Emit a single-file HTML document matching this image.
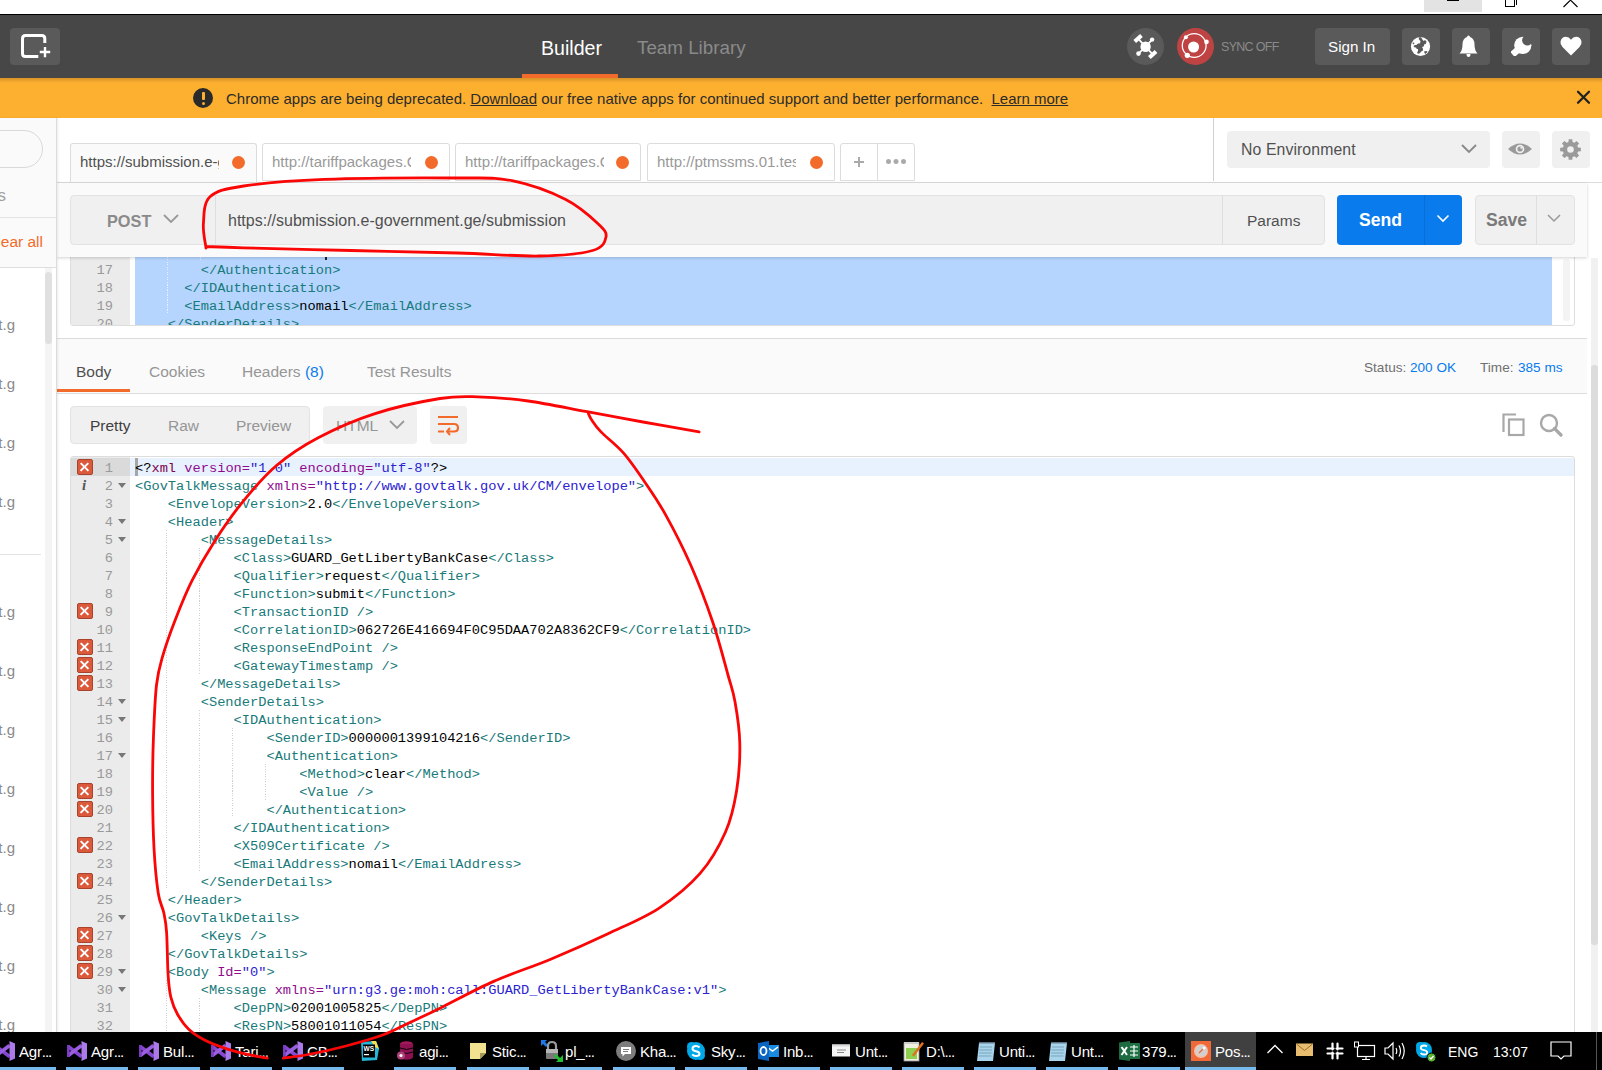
<!DOCTYPE html>
<html><head><meta charset="utf-8">
<style>
*{margin:0;padding:0;box-sizing:border-box}
html,body{width:1602px;height:1070px;overflow:hidden;background:#fff;font-family:"Liberation Sans",sans-serif}
.a{position:absolute}
.mono{font-family:"Liberation Mono",monospace}
/* nav */
#top{left:0;top:0;width:1602px;height:14px;background:#fff}
#nav{left:0;top:14px;width:1602px;height:64px;background:#474747;border-top:1px solid #000}
.nbtn{background:#5a5a5a;border-radius:4px;height:37px;top:28px}
#banner{left:0;top:78px;width:1602px;height:40px;background:#fdb02f}
#banner:before{content:"";position:absolute;left:0;top:0;right:0;height:5px;background:linear-gradient(#d99228,#fdb02f)}
/* sidebar */
#side{left:0;top:118px;width:57px;height:914px;background:#fff;border-right:1px solid #dcdcdc;box-shadow:1px 0 2px rgba(0,0,0,.08);overflow:hidden;z-index:2}
.tg{font-size:15px;color:#8a8a8a;white-space:nowrap}
.tab{top:143px;height:40px;border:1px solid #dcdcdc;border-bottom:none;border-radius:3px 3px 0 0;background:#fff}
.tab span{position:absolute;left:9px;top:9px;font-size:15px;color:#999;white-space:nowrap;overflow:hidden;width:139px}
.tab i{position:absolute;right:11px;top:12px;width:13px;height:13px;border-radius:50%;background:#f26b2a}
.code{font-size:13.7px;line-height:18px;white-space:pre;color:#000}
.cl{position:absolute;left:64px;height:18px;line-height:18px;margin-top:2px}
.ln{position:absolute;left:0;width:42px;text-align:right;color:#999;height:18px;line-height:18px;margin-top:2px}
.err{position:absolute;left:5.5px;width:16px;height:16px;background:#dc5a3c;border:1px solid #a8432c;border-radius:2px}
.err:before,.err:after{content:"";position:absolute;left:1.5px;top:6px;width:11px;height:2.2px;background:#fff;transform:rotate(45deg)}
.err:after{transform:rotate(-45deg)}
.info{position:absolute;left:11px;width:8px;font:italic bold 15px "Liberation Serif",serif;color:#555;height:18px;line-height:18px}
.fold{position:absolute;left:47px;width:0;height:0;border-left:4px solid transparent;border-right:4px solid transparent;border-top:5px solid #777}
.gd{position:absolute;width:1px;background:repeating-linear-gradient(#cfcfcf 0 1px,transparent 1px 2.5px)}
.tbt{top:1043px;font-size:15px;color:#fff;white-space:nowrap;letter-spacing:-0.2px}
.el{letter-spacing:-1px}
.st{top:360px;font-size:13.6px;color:#707070;white-space:nowrap}
.tb2{height:38px;border-bottom:1px solid #dcdcdc;border-radius:3px 3px 0 0}
.gdw{background:repeating-linear-gradient(#e9f1ff 0 1px,transparent 1px 2.5px)}
</style></head><body>
<div id="top" class="a">
  <div class="a" style="left:1424px;top:0;width:58px;height:12px;background:#e3e3e3"></div>
  <div class="a" style="left:1447px;top:0;width:12px;height:1px;background:#000"></div>
  <div class="a" style="left:1505px;top:-4px;width:10px;height:11px;border:1px solid #000;background:#fff;z-index:1"></div>
  <div class="a" style="left:1507px;top:-6px;width:10px;height:11px;border-top:1px solid #000;border-right:1px solid #000"></div>
  <svg class="a" style="left:1560px;top:0" width="20" height="10"><path d="M3.5 7 L10.5 0 M10.5 0 L17.5 7 M9.5 0 L10.5 -1 M11.5 0 L10.5 -1" stroke="#000" stroke-width="1.1" fill="none"/></svg>
</div>
<div id="nav" class="a">
  <div class="a nbtn" style="left:10px;top:13px;width:50px;height:37px"></div>
  <svg class="a" style="left:20px;top:19px" width="32" height="26"><path d="M24.8 9 V4.5 Q24.8 1.5 21.8 1.5 H5.5 Q2.5 1.5 2.5 4.5 V19.5 Q2.5 22.5 5.5 22.5 H18.3" stroke="#fff" stroke-width="3" fill="none"/><path d="M25 13 V23.2 M19.8 18 H30.2" stroke="#fff" stroke-width="2.4" fill="none"/></svg>
  <div class="a" style="left:541px;top:22px;font-size:19.6px;color:#fff">Builder</div>
  <div class="a" style="left:522px;top:59px;width:96px;height:4px;background:#f26b2a"></div>
  <div class="a" style="left:637px;top:21.5px;font-size:18.8px;color:#8a8a8a">Team Library</div>
  <div class="a" style="left:1127px;top:13px;width:37px;height:37px;border-radius:50%;background:#5a5a5a"></div>
  <div class="a" style="left:1177px;top:13px;width:37px;height:37px;border-radius:50%;background:#bf4343"></div>
  <div class="a" style="left:1221px;top:25px;font-size:12.5px;color:#8a8a8a;letter-spacing:-0.7px">SYNC OFF</div>
  <div class="a nbtn" style="left:1315px;top:13px;width:75px"></div>
  <div class="a" style="left:1328px;top:23px;font-size:15.2px;color:#fff">Sign In</div>
  <div class="a nbtn" style="left:1402px;top:13px;width:38px"></div>
  <div class="a nbtn" style="left:1452px;top:13px;width:38px"></div>
  <div class="a nbtn" style="left:1502px;top:13px;width:38px"></div>
  <div class="a nbtn" style="left:1552px;top:13px;width:38px"></div>
</div><!--NAVICONS-->
<svg class="a" style="left:1130px;top:30px" width="32" height="32"><path d="M8.1 8.6 L22.7 24.4 M15.6 16.7 L8.5 23.6 M15.6 16.7 L22.1 9.6" stroke="#fff" stroke-width="1.8"/><circle cx="15.6" cy="16.7" r="5.2" fill="#fff"/><rect x="3.6" y="6.6" width="9" height="4" transform="rotate(-42 8.1 8.6)" fill="#fff"/><rect x="18.2" y="22.4" width="9" height="4" transform="rotate(-42 22.7 24.4)" fill="#fff"/><circle cx="22.1" cy="9.6" r="2.2" fill="#fff"/><circle cx="8.5" cy="23.6" r="2.3" fill="#fff"/></svg>
<svg class="a" style="left:1180px;top:31px" width="32" height="32"><circle cx="14.2" cy="14.5" r="11.9" stroke="#fff" stroke-width="1.3" fill="none"/><circle cx="13.6" cy="16" r="5.5" fill="#fff"/><circle cx="5.9" cy="6.2" r="2" fill="#fff"/><circle cx="26.5" cy="10.9" r="2.3" fill="#fff"/><circle cx="7.3" cy="24.3" r="2.6" fill="#fff"/></svg>
<svg class="a" style="left:1410px;top:36px" width="22" height="22"><circle cx="10.5" cy="10.5" r="9.6" fill="#fff"/><path d="M9 1.2 Q8 3.5 10 4.5 Q11.5 6 9.5 7.5 Q7 7 6.5 9 Q4.5 8.5 3.5 10 Q4.5 12 6 11.5 Q6.5 13.5 8 13 Q8.5 15.5 7 17 Q8.5 18.5 10 17 Q11 15 13 14.5 Q13.5 12.5 12 11 Q14.5 10.5 14 8.5 Q16.5 8 16.5 5.5 Q15 3.5 13.5 5 Q12 3 11 1.2 Z" fill="#5a5a5a"/><path d="M2.5 6.5 Q4 6 4.5 7.5 L3 8.5 Z" fill="#5a5a5a"/><path d="M14 15.5 Q16 14.5 17.5 15.5 Q16.5 17.5 15 18 Z" fill="#5a5a5a"/></svg>
<svg class="a" style="left:1459px;top:34px" width="20" height="24"><path d="M9.5 1.5 Q11 1.5 11 3 Q15.5 4.5 15.5 10.5 Q15.5 16.5 18.5 19.5 H0.5 Q3.5 16.5 3.5 10.5 Q3.5 4.5 8 3 Q8 1.5 9.5 1.5 Z" fill="#fff"/><path d="M7.5 20 Q7.5 23 9.5 23 Q11.5 23 11.5 20 Z" fill="#fff"/></svg>
<svg class="a" style="left:1509px;top:35px" width="24" height="23"><defs><mask id="wm"><rect width="24" height="23" fill="#fff"/><circle cx="18.3" cy="5.2" r="5.2" fill="#000"/></mask></defs><g mask="url(#wm)"><circle cx="13.8" cy="10.3" r="8.6" fill="#fff"/><path d="M12 12 L3.5 19.5" stroke="#fff" stroke-width="6.5"/></g></svg>
<svg class="a" style="left:1560px;top:36px" width="22" height="20"><path d="M11 19.5 L2.5 11 Q0 8.5 0.5 5.5 Q1.5 1 6 0.8 Q9 0.8 11 3.8 Q13 0.8 16 0.8 Q20.5 1 21.5 5.5 Q22 8.5 19.5 11 Z" fill="#fff"/></svg>
<!--/NAVICONS-->
<div id="banner" class="a">
  <div class="a" style="left:193px;top:10px;width:20px;height:20px;border-radius:50%;background:#2a2a2a"></div>
  <div class="a" style="left:201.5px;top:14px;width:3px;height:8px;background:#fdb02f;border-radius:1px"></div>
  <div class="a" style="left:201.5px;top:23.5px;width:3px;height:3px;background:#fdb02f;border-radius:50%"></div>
  <div class="a" style="left:226px;top:12px;font-size:15px;color:#2b2b2b;white-space:nowrap">Chrome apps are being deprecated. <u>Download</u> our free native apps for continued support and better performance. &nbsp;<u>Learn more</u></div>
  <svg class="a" style="left:1576px;top:12px" width="15" height="15"><path d="M2 1.8 L13 12.8 M13 1.8 L2 12.8" stroke="#222" stroke-width="2.3" stroke-linecap="round"/></svg>
</div>
<div id="side" class="a"><div class="a" style="left:-40px;top:12px;width:83px;height:38px;border:1px solid #d9d9d9;border-radius:19px;background:#fafafa"></div><div class="a" style="left:0;top:0;width:56px;height:150px;background:#fafafa;z-index:-1"></div><div class="a" style="right:50px;top:68px;font-size:17px;color:#a0a0a0">s</div><div class="a" style="left:0;top:99px;width:56px;height:1px;background:#e3e3e3"></div><div class="a" style="right:13px;top:115px;font-size:15.5px;color:#f26b2a;white-space:nowrap">Clear all</div><div class="a" style="left:0;top:149px;width:56px;height:1px;background:#dedede"></div><div class="a" style="left:45px;top:150px;width:7px;height:764px;background:#f4f4f4"></div><div class="a" style="left:45px;top:154px;width:7px;height:72px;background:#e0e0e0;border-radius:3.5px"></div><div class="a" style="left:0;top:436px;width:41px;height:1px;background:#e3e3e3"></div><div class="a tg" style="right:41px;top:198px">t.g</div><div class="a tg" style="right:41px;top:257px">t.g</div><div class="a tg" style="right:41px;top:316px">t.g</div><div class="a tg" style="right:41px;top:375px">t.g</div><div class="a tg" style="right:41px;top:485px">t.g</div><div class="a tg" style="right:41px;top:544px">t.g</div><div class="a tg" style="right:41px;top:603px">t.g</div><div class="a tg" style="right:41px;top:662px">t.g</div><div class="a tg" style="right:41px;top:721px">t.g</div><div class="a tg" style="right:41px;top:780px">t.g</div><div class="a tg" style="right:41px;top:839px">t.g</div><div class="a tg" style="right:41px;top:898px">t.g</div></div>

<div class="a" style="left:57px;top:118px;width:1545px;height:914px;background:#fff"></div>
<!-- tabs row -->
<div class="a tab" style="left:70px;width:187px;background:#fafafa"><span style="color:#505050">https://submission.e-g</span><i></i></div>
<div class="a tab tb2" style="left:262px;width:188px"><span>http://tariffpackages.C</span><i></i></div>
<div class="a tab tb2" style="left:455px;width:186px"><span>http://tariffpackages.C</span><i></i></div>
<div class="a tab tb2" style="left:647px;width:188px"><span>http://ptmssms.01.tes</span><i></i></div>
<div class="a tab tb2" style="left:840px;width:75px"></div>
<div class="a" style="left:877px;top:144px;width:1px;height:37px;background:#dcdcdc"></div>
<div class="a" style="left:854px;top:161px;width:10px;height:2px;background:#aaa"></div>
<div class="a" style="left:858px;top:157px;width:2px;height:10px;background:#aaa"></div>
<div class="a" style="left:886px;top:159px;width:5px;height:5px;border-radius:50%;background:#aaa;box-shadow:7.5px 0 0 #aaa,15px 0 0 #aaa"></div>
<div class="a" style="left:1213px;top:118px;width:1px;height:63px;background:#d0d0d0"></div>
<div class="a" style="left:1227px;top:131px;width:263px;height:37px;background:#f0f0f0;border-radius:4px"></div>
<div class="a" style="left:1241px;top:141px;font-size:15.8px;letter-spacing:0.1px;color:#505050">No Environment</div>
<svg class="a" style="left:1460px;top:143px" width="18" height="12"><path d="M2 2 L9 9 L16 2" stroke="#888" stroke-width="1.8" fill="none"/></svg>
<div class="a" style="left:1502px;top:131px;width:38px;height:37px;background:#f0f0f0;border-radius:4px"></div>
<div class="a" style="left:1552px;top:131px;width:38px;height:37px;background:#f0f0f0;border-radius:4px"></div>
<svg class="a" style="left:1507px;top:141px" width="26" height="16"><path d="M1 8 Q13 -3 25 8 Q13 19 1 8 Z" fill="#9a9a9a"/><circle cx="13" cy="8" r="4.3" fill="#f0f0f0"/><circle cx="13" cy="8" r="2.6" fill="#9a9a9a"/><circle cx="14.3" cy="6.8" r="1" fill="#f0f0f0"/></svg><svg class="a" style="left:1560px;top:139px" width="21" height="21"><path d="M18.02 8.42 L20.84 8.69 L20.84 12.31 L18.02 12.58 L17.29 14.34 L19.09 16.54 L16.54 19.09 L14.34 17.29 L12.58 18.02 L12.31 20.84 L8.69 20.84 L8.42 18.02 L6.66 17.29 L4.46 19.09 L1.91 16.54 L3.71 14.34 L2.98 12.58 L0.16 12.31 L0.16 8.69 L2.98 8.42 L3.71 6.66 L1.91 4.46 L4.46 1.91 L6.66 3.71 L8.42 2.98 L8.69 0.16 L12.31 0.16 L12.58 2.98 L14.34 3.71 L16.54 1.91 L19.09 4.46 L17.29 6.66 Z" fill="#9a9a9a"/><circle cx="10.5" cy="10.5" r="3.3" fill="#f0f0f0"/></svg><div class="a" style="left:57px;top:182px;width:1545px;height:1px;background:#dcdcdc"></div>
<!-- request editor -->
<div id="reqed" class="a" style="left:70px;top:240px;width:1505px;height:86px;border:1px solid #ddd;border-radius:3px;background:#fff;overflow:hidden">
  <div class="a" style="left:0;top:0;width:59px;height:86px;background:#ebebeb"></div>
  <div class="a" style="left:64px;top:0;width:1417px;height:86px;background:#b5d5ff"></div>
  <div class="a" style="left:1492px;top:18px;width:7px;height:62px;background:#f3f3f3;border-radius:3px"></div>
  <div class="a mono code" style="left:0;top:19px;width:1500px" id="reqcode"><div class="ln" style="top:0px">17</div><div class="cl" style="top:0px">        <span style="color:#187a7a">&lt;/Authentication</span><span style="color:#187a7a">&gt;</span></div><div class="ln" style="top:18px">18</div><div class="cl" style="top:18px">      <span style="color:#187a7a">&lt;/IDAuthentication</span><span style="color:#187a7a">&gt;</span></div><div class="ln" style="top:36px">19</div><div class="cl" style="top:36px">      <span style="color:#187a7a">&lt;EmailAddress</span><span style="color:#187a7a">&gt;</span>nomail<span style="color:#187a7a">&lt;/EmailAddress</span><span style="color:#187a7a">&gt;</span></div><div class="ln" style="top:54px">20</div><div class="cl" style="top:54px">    <span style="color:#187a7a">&lt;/SenderDetails</span><span style="color:#187a7a">&gt;</span></div><div class="gd gdw" style="left:95.9px;top:-18px;height:72px"></div><div class="gd gdw" style="left:128.8px;top:-18px;height:20px"></div><div class="a" style="left:254px;top:-3px;width:2px;height:3px;background:#222"></div></div><!--endreq-->
</div>
<!-- url panel -->
<div class="a" style="left:57px;top:183px;width:1530px;height:74px;background:#fafafa;box-shadow:0 1px 3px rgba(0,0,0,.18)"></div>
<div class="a" style="left:70px;top:195px;width:1255px;height:50px;background:#f0f0f0;border:1px solid #e3e3e3;border-radius:4px"></div>
<div class="a" style="left:215px;top:196px;width:1px;height:48px;background:#dedede"></div>
<div class="a" style="left:1222px;top:196px;width:1px;height:48px;background:#dedede"></div>
<div class="a" style="left:107px;top:212px;font-size:16.3px;color:#8a8a8a;font-weight:bold">POST</div>
<svg class="a" style="left:162px;top:213px" width="18" height="12"><path d="M2 2 L9 9 L16 2" stroke="#999" stroke-width="1.8" fill="none"/></svg>
<div class="a" style="left:228px;top:212px;font-size:16px;color:#505050">https://submission.e-government.ge/submission</div>
<div class="a" style="left:1247px;top:212px;font-size:15.5px;color:#505050">Params</div>
<div class="a" style="left:1337px;top:195px;width:125px;height:50px;background:#097bed;border-radius:4px"></div>
<div class="a" style="left:1424px;top:195px;width:1px;height:50px;background:#0a6fd4"></div>
<div class="a" style="left:1359px;top:210px;font-size:17.6px;color:#fff;font-weight:bold">Send</div>
<svg class="a" style="left:1435px;top:213px" width="16" height="11"><path d="M2.5 2.5 L8 8 L13.5 2.5" stroke="#fff" stroke-width="1.6" fill="none"/></svg>
<div class="a" style="left:1475px;top:195px;width:100px;height:50px;background:#f0f0f0;border:1px solid #e3e3e3;border-radius:4px"></div>
<div class="a" style="left:1536px;top:196px;width:1px;height:48px;background:#dedede"></div>
<div class="a" style="left:1486px;top:210px;font-size:17.6px;color:#7a7a7a;font-weight:bold">Save</div>
<svg class="a" style="left:1546px;top:213px" width="16" height="11"><path d="M2 2 L8 8 L14 2" stroke="#999" stroke-width="1.5" fill="none"/></svg>
<!-- response header -->
<div class="a" style="left:57px;top:338px;width:1530px;height:56px;background:#fafafa;border-top:1px solid #dcdcdc;border-bottom:1px solid #dcdcdc"></div>
<div class="a" style="left:76px;top:363px;font-size:15.5px;color:#505050">Body</div>
<div class="a" style="left:57px;top:389px;width:73px;height:3px;background:#f26b2a"></div>
<div class="a" style="left:149px;top:363px;font-size:15.5px;color:#969696">Cookies</div>
<div class="a" style="left:242px;top:363px;font-size:15.5px;color:#969696">Headers <span style="color:#097bed">(8)</span></div>
<div class="a" style="left:367px;top:363px;font-size:15.5px;color:#969696">Test Results</div>
<div class="a st" style="left:1364px">Status:</div><div class="a st" style="left:1410px;color:#097bed">200 OK</div>
<div class="a st" style="left:1480px">Time:</div><div class="a st" style="left:1518px;color:#097bed">385 ms</div>
<!-- toolbar -->
<div class="a" style="left:70px;top:406px;width:240px;height:38px;background:#f0f0f0;border:1px solid #e3e3e3;border-radius:4px"></div>
<div class="a" style="left:90px;top:417px;font-size:15.5px;color:#404040">Pretty</div>
<div class="a" style="left:168px;top:417px;font-size:15.5px;color:#969696">Raw</div>
<div class="a" style="left:236px;top:417px;font-size:15.5px;color:#969696">Preview</div>
<div class="a" style="left:323px;top:406px;width:94px;height:38px;background:#f0f0f0;border-radius:4px"></div>
<div class="a" style="left:336px;top:417px;font-size:15.5px;color:#969696">HTML</div>
<svg class="a" style="left:388px;top:419px" width="18" height="12"><path d="M2 2 L9 9 L16 2" stroke="#999" stroke-width="1.8" fill="none"/></svg>
<div class="a" style="left:430px;top:406px;width:37px;height:38px;background:#f0f0f0;border-radius:4px"></div>
<svg class="a" style="left:436px;top:413px" width="26" height="24"><path d="M2 4 H22 M2 11 H18 Q22 11 22 15 Q22 18.5 18 18.5 H12 M2 18.5 H8" stroke="#f26b2a" stroke-width="2.2" fill="none"/><path d="M14 15 L11 18.5 L14 22" stroke="#f26b2a" stroke-width="2" fill="none"/></svg>
<svg class="a" style="left:1502px;top:413px" width="24" height="24"><path d="M1.5 19 V1.5 H14" stroke="#a8a8a8" stroke-width="2.2" fill="none"/><rect x="7" y="6.5" width="14.5" height="15.5" stroke="#a8a8a8" stroke-width="2.2" fill="none"/></svg>
<svg class="a" style="left:1539px;top:413px" width="24" height="24"><circle cx="10" cy="10" r="8" stroke="#a8a8a8" stroke-width="2.4" fill="none"/><path d="M15.5 15.5 L22 22" stroke="#a8a8a8" stroke-width="3.2" stroke-linecap="round"/></svg>
<!-- code editor -->
<div id="ed" class="a" style="left:70px;top:456px;width:1505px;height:600px;border:1px solid #ddd;border-radius:3px;background:#fff;overflow:hidden">
  <div class="a" style="left:0;top:0;width:59px;height:600px;background:#ebebeb"></div>
  <div class="a" style="left:0;top:1px;width:59px;height:18px;background:#dadada"></div>
  <div class="a" style="left:59px;top:1px;width:1446px;height:18px;background:#e8f2fe"></div>
  <div class="a" style="left:64px;top:1px;width:3px;height:18px;background:#a6a6a6"></div>
  <div class="a mono code" style="left:0;top:1px;width:1500px" id="code"><div class="gd" style="left:94.9px;top:72px;height:360px"></div><div class="gd" style="left:127.8px;top:90px;height:126px"></div><div class="gd" style="left:127.8px;top:252px;height:162px"></div><div class="gd" style="left:160.8px;top:270px;height:90px"></div><div class="gd" style="left:193.7px;top:306px;height:36px"></div><div class="gd" style="left:94.9px;top:522px;height:54px"></div><div class="gd" style="left:127.8px;top:540px;height:36px"></div><div class="err" style="top:1px"></div><div class="ln" style="top:0px">1</div><div class="cl" style="top:0px">&lt;?<span style="color:#80004f">xml</span> <span style="color:#8e0b8e">version=</span><span style="color:#2b22d0">&quot;1.0&quot;</span> <span style="color:#8e0b8e">encoding=</span><span style="color:#2b22d0">&quot;utf-8&quot;</span>?&gt;</div><div class="info" style="top:18px">i</div><div class="ln" style="top:18px">2</div><div class="fold" style="top:25px"></div><div class="cl" style="top:18px"><span style="color:#187a7a">&lt;GovTalkMessage</span> <span style="color:#8e0b8e">xmlns=</span><span style="color:#2b22d0">&quot;http://www.govtalk.gov.uk/CM/envelope&quot;</span><span style="color:#187a7a">&gt;</span></div><div class="ln" style="top:36px">3</div><div class="cl" style="top:36px">    <span style="color:#187a7a">&lt;EnvelopeVersion</span><span style="color:#187a7a">&gt;</span>2.0<span style="color:#187a7a">&lt;/EnvelopeVersion</span><span style="color:#187a7a">&gt;</span></div><div class="ln" style="top:54px">4</div><div class="fold" style="top:61px"></div><div class="cl" style="top:54px">    <span style="color:#187a7a">&lt;Header</span><span style="color:#187a7a">&gt;</span></div><div class="ln" style="top:72px">5</div><div class="fold" style="top:79px"></div><div class="cl" style="top:72px">        <span style="color:#187a7a">&lt;MessageDetails</span><span style="color:#187a7a">&gt;</span></div><div class="ln" style="top:90px">6</div><div class="cl" style="top:90px">            <span style="color:#187a7a">&lt;Class</span><span style="color:#187a7a">&gt;</span>GUARD_GetLibertyBankCase<span style="color:#187a7a">&lt;/Class</span><span style="color:#187a7a">&gt;</span></div><div class="ln" style="top:108px">7</div><div class="cl" style="top:108px">            <span style="color:#187a7a">&lt;Qualifier</span><span style="color:#187a7a">&gt;</span>request<span style="color:#187a7a">&lt;/Qualifier</span><span style="color:#187a7a">&gt;</span></div><div class="ln" style="top:126px">8</div><div class="cl" style="top:126px">            <span style="color:#187a7a">&lt;Function</span><span style="color:#187a7a">&gt;</span>submit<span style="color:#187a7a">&lt;/Function</span><span style="color:#187a7a">&gt;</span></div><div class="err" style="top:145px"></div><div class="ln" style="top:144px">9</div><div class="cl" style="top:144px">            <span style="color:#187a7a">&lt;TransactionID</span><span style="color:#187a7a"> /&gt;</span></div><div class="ln" style="top:162px">10</div><div class="cl" style="top:162px">            <span style="color:#187a7a">&lt;CorrelationID</span><span style="color:#187a7a">&gt;</span>062726E416694F0C95DAA702A8362CF9<span style="color:#187a7a">&lt;/CorrelationID</span><span style="color:#187a7a">&gt;</span></div><div class="err" style="top:181px"></div><div class="ln" style="top:180px">11</div><div class="cl" style="top:180px">            <span style="color:#187a7a">&lt;ResponseEndPoint</span><span style="color:#187a7a"> /&gt;</span></div><div class="err" style="top:199px"></div><div class="ln" style="top:198px">12</div><div class="cl" style="top:198px">            <span style="color:#187a7a">&lt;GatewayTimestamp</span><span style="color:#187a7a"> /&gt;</span></div><div class="err" style="top:217px"></div><div class="ln" style="top:216px">13</div><div class="cl" style="top:216px">        <span style="color:#187a7a">&lt;/MessageDetails</span><span style="color:#187a7a">&gt;</span></div><div class="ln" style="top:234px">14</div><div class="fold" style="top:241px"></div><div class="cl" style="top:234px">        <span style="color:#187a7a">&lt;SenderDetails</span><span style="color:#187a7a">&gt;</span></div><div class="ln" style="top:252px">15</div><div class="fold" style="top:259px"></div><div class="cl" style="top:252px">            <span style="color:#187a7a">&lt;IDAuthentication</span><span style="color:#187a7a">&gt;</span></div><div class="ln" style="top:270px">16</div><div class="cl" style="top:270px">                <span style="color:#187a7a">&lt;SenderID</span><span style="color:#187a7a">&gt;</span>0000001399104216<span style="color:#187a7a">&lt;/SenderID</span><span style="color:#187a7a">&gt;</span></div><div class="ln" style="top:288px">17</div><div class="fold" style="top:295px"></div><div class="cl" style="top:288px">                <span style="color:#187a7a">&lt;Authentication</span><span style="color:#187a7a">&gt;</span></div><div class="ln" style="top:306px">18</div><div class="cl" style="top:306px">                    <span style="color:#187a7a">&lt;Method</span><span style="color:#187a7a">&gt;</span>clear<span style="color:#187a7a">&lt;/Method</span><span style="color:#187a7a">&gt;</span></div><div class="err" style="top:325px"></div><div class="ln" style="top:324px">19</div><div class="cl" style="top:324px">                    <span style="color:#187a7a">&lt;Value</span><span style="color:#187a7a"> /&gt;</span></div><div class="err" style="top:343px"></div><div class="ln" style="top:342px">20</div><div class="cl" style="top:342px">                <span style="color:#187a7a">&lt;/Authentication</span><span style="color:#187a7a">&gt;</span></div><div class="ln" style="top:360px">21</div><div class="cl" style="top:360px">            <span style="color:#187a7a">&lt;/IDAuthentication</span><span style="color:#187a7a">&gt;</span></div><div class="err" style="top:379px"></div><div class="ln" style="top:378px">22</div><div class="cl" style="top:378px">            <span style="color:#187a7a">&lt;X509Certificate</span><span style="color:#187a7a"> /&gt;</span></div><div class="ln" style="top:396px">23</div><div class="cl" style="top:396px">            <span style="color:#187a7a">&lt;EmailAddress</span><span style="color:#187a7a">&gt;</span>nomail<span style="color:#187a7a">&lt;/EmailAddress</span><span style="color:#187a7a">&gt;</span></div><div class="err" style="top:415px"></div><div class="ln" style="top:414px">24</div><div class="cl" style="top:414px">        <span style="color:#187a7a">&lt;/SenderDetails</span><span style="color:#187a7a">&gt;</span></div><div class="ln" style="top:432px">25</div><div class="cl" style="top:432px">    <span style="color:#187a7a">&lt;/Header</span><span style="color:#187a7a">&gt;</span></div><div class="ln" style="top:450px">26</div><div class="fold" style="top:457px"></div><div class="cl" style="top:450px">    <span style="color:#187a7a">&lt;GovTalkDetails</span><span style="color:#187a7a">&gt;</span></div><div class="err" style="top:469px"></div><div class="ln" style="top:468px">27</div><div class="cl" style="top:468px">        <span style="color:#187a7a">&lt;Keys</span><span style="color:#187a7a"> /&gt;</span></div><div class="err" style="top:487px"></div><div class="ln" style="top:486px">28</div><div class="cl" style="top:486px">    <span style="color:#187a7a">&lt;/GovTalkDetails</span><span style="color:#187a7a">&gt;</span></div><div class="err" style="top:505px"></div><div class="ln" style="top:504px">29</div><div class="fold" style="top:511px"></div><div class="cl" style="top:504px">    <span style="color:#187a7a">&lt;Body</span> <span style="color:#8e0b8e">Id=</span><span style="color:#2b22d0">&quot;0&quot;</span><span style="color:#187a7a">&gt;</span></div><div class="ln" style="top:522px">30</div><div class="fold" style="top:529px"></div><div class="cl" style="top:522px">        <span style="color:#187a7a">&lt;Message</span> <span style="color:#8e0b8e">xmlns=</span><span style="color:#2b22d0">&quot;urn:g3.ge:moh:call:GUARD_GetLibertyBankCase:v1&quot;</span><span style="color:#187a7a">&gt;</span></div><div class="ln" style="top:540px">31</div><div class="cl" style="top:540px">            <span style="color:#187a7a">&lt;DepPN</span><span style="color:#187a7a">&gt;</span>02001005825<span style="color:#187a7a">&lt;/DepPN</span><span style="color:#187a7a">&gt;</span></div><div class="ln" style="top:558px">32</div><div class="cl" style="top:558px">            <span style="color:#187a7a">&lt;ResPN</span><span style="color:#187a7a">&gt;</span>58001011054<span style="color:#187a7a">&lt;/ResPN</span><span style="color:#187a7a">&gt;</span></div></div><!--endcode-->
</div>
<div class="a" style="left:1591px;top:258px;width:7px;height:774px;background:#f1f1f1"></div>
<div class="a" style="left:1591px;top:365px;width:7px;height:580px;background:#dcdcdc;border-radius:3px"></div>

<!--CODE-->
<!--TB--><div class="a" style="left:0;top:1032px;width:1602px;height:38px;background:#000"></div><svg class="a" style="left:-5px;top:1041px" width="20" height="20"><path d="M1.2 5.5 L14.5 15.5" stroke="#8648d2" stroke-width="3.6"/><path d="M1.2 14.5 L14.5 4.5" stroke="#9a5fe0" stroke-width="3.6"/><rect x="0" y="4" width="2.6" height="12" fill="#7a3cc0"/><path d="M14.5 0 L20 2.5 V17.5 L14.5 20 Z" fill="#a97ae8"/></svg><div class="a tbt" style="left:19px">Agr<span class="el">...</span></div><div class="a" style="left:0px;top:1067px;width:56px;height:3px;background:#76b9ed"></div><svg class="a" style="left:67px;top:1041px" width="20" height="20"><path d="M1.2 5.5 L14.5 15.5" stroke="#8648d2" stroke-width="3.6"/><path d="M1.2 14.5 L14.5 4.5" stroke="#9a5fe0" stroke-width="3.6"/><rect x="0" y="4" width="2.6" height="12" fill="#7a3cc0"/><path d="M14.5 0 L20 2.5 V17.5 L14.5 20 Z" fill="#a97ae8"/></svg><div class="a tbt" style="left:91px">Agr<span class="el">...</span></div><div class="a" style="left:66px;top:1067px;width:62px;height:3px;background:#76b9ed"></div><svg class="a" style="left:139px;top:1041px" width="20" height="20"><path d="M1.2 5.5 L14.5 15.5" stroke="#8648d2" stroke-width="3.6"/><path d="M1.2 14.5 L14.5 4.5" stroke="#9a5fe0" stroke-width="3.6"/><rect x="0" y="4" width="2.6" height="12" fill="#7a3cc0"/><path d="M14.5 0 L20 2.5 V17.5 L14.5 20 Z" fill="#a97ae8"/></svg><div class="a tbt" style="left:163px">Bul<span class="el">...</span></div><div class="a" style="left:138px;top:1067px;width:62px;height:3px;background:#76b9ed"></div><svg class="a" style="left:211px;top:1041px" width="20" height="20"><path d="M1.2 5.5 L14.5 15.5" stroke="#8648d2" stroke-width="3.6"/><path d="M1.2 14.5 L14.5 4.5" stroke="#9a5fe0" stroke-width="3.6"/><rect x="0" y="4" width="2.6" height="12" fill="#7a3cc0"/><path d="M14.5 0 L20 2.5 V17.5 L14.5 20 Z" fill="#a97ae8"/></svg><div class="a tbt" style="left:235px">Tari<span class="el">...</span></div><div class="a" style="left:210px;top:1067px;width:62px;height:3px;background:#76b9ed"></div><svg class="a" style="left:283px;top:1041px" width="20" height="20"><path d="M1.2 5.5 L14.5 15.5" stroke="#8648d2" stroke-width="3.6"/><path d="M1.2 14.5 L14.5 4.5" stroke="#9a5fe0" stroke-width="3.6"/><rect x="0" y="4" width="2.6" height="12" fill="#7a3cc0"/><path d="M14.5 0 L20 2.5 V17.5 L14.5 20 Z" fill="#a97ae8"/></svg><div class="a tbt" style="left:307px">CB<span class="el">...</span></div><div class="a" style="left:282px;top:1067px;width:62px;height:3px;background:#76b9ed"></div><svg class="a" style="left:359px;top:1041px" width="20" height="20"><path d="M2 1 L17 0 L20 8 L18 19 L3 20 Z" fill="#27b5d8"/><path d="M12 0 L17 0 L20 8 L16 6 Z" fill="#f5e050"/><rect x="4" y="3.5" width="12" height="13" fill="#000"/><text x="4.5" y="10" font-size="6.5" font-weight="bold" fill="#fff" font-family="Liberation Sans">WS</text><rect x="5" y="13" width="5" height="1.2" fill="#fff"/></svg><svg class="a" style="left:396px;top:1041px" width="18" height="20"><ellipse cx="10.5" cy="3" rx="6.5" ry="2.8" fill="#a5185e"/><rect x="4" y="3" width="13" height="13" fill="#8d1050"/><ellipse cx="10.5" cy="16" rx="6.5" ry="2.8" fill="#8d1050"/><path d="M4 7 Q10.5 10 17 7 M4 11 Q10.5 14 17 11" stroke="#000" stroke-width="0.9" fill="none"/><circle cx="5" cy="14.5" r="4" fill="#b0407a"/><circle cx="5" cy="14.5" r="1.6" fill="#fff"/></svg><div class="a tbt" style="left:419px">agi<span class="el">...</span></div><div class="a" style="left:394px;top:1067px;width:62px;height:3px;background:#76b9ed"></div><svg class="a" style="left:470px;top:1043px" width="16" height="16"><path d="M0 0 H16 V10 L10 16 H0 Z" fill="#f2e290"/><path d="M16 10 L10 10 L10 16 Z" fill="#a8995a"/></svg><div class="a tbt" style="left:492px">Stic<span class="el">...</span></div><div class="a" style="left:467px;top:1067px;width:62px;height:3px;background:#76b9ed"></div><svg class="a" style="left:541px;top:1040px" width="22" height="22"><path d="M0 0 H6 L4 2 L7 5 L5 7 L2 4 L0 6 Z" fill="#1e78e6"/><path d="M7 9 V6 Q7 2 11 2 Q15 2 15 6 V9" stroke="#9a9a9a" stroke-width="2.2" fill="none"/><rect x="5" y="9" width="12" height="10" rx="1" fill="#7a7a7a"/><rect x="5" y="9" width="12" height="4" fill="#b5b5b5"/><path d="M22 22 H15 L17 20 L13 16 L15 14 L19 18 L22 15 Z" fill="#20c030"/></svg><div class="a tbt" style="left:565px">pl_<span class="el">...</span></div><div class="a" style="left:540px;top:1067px;width:62px;height:3px;background:#76b9ed"></div><svg class="a" style="left:616px;top:1041px" width="20" height="20"><circle cx="10" cy="10" r="10" fill="#7d7d7d"/><path d="M5 6 H15 V13 H9 L6.5 15.5 V13 H5 Z" fill="#fff"/><path d="M7 8.5 H13 M7 10.5 H12" stroke="#7d7d7d" stroke-width="1"/></svg><div class="a tbt" style="left:640px">Kha<span class="el">...</span></div><div class="a" style="left:613px;top:1067px;width:62px;height:3px;background:#76b9ed"></div><svg class="a" style="left:686px;top:1041px" width="20" height="20"><circle cx="10" cy="10" r="9" fill="#00a8e8"/><circle cx="5.5" cy="5.5" r="4.5" fill="#00a8e8"/><circle cx="14.5" cy="14.5" r="4.5" fill="#00a8e8"/><path d="M13.5 6.5 Q12 5 10 5 Q6.5 5 6.5 7.7 Q6.5 9.5 10 10.2 Q13.5 11 13.5 12.7 Q13.5 15 10 15 Q7.5 15 6.2 13.3" stroke="#fff" stroke-width="2" fill="none"/></svg><div class="a tbt" style="left:711px">Sky<span class="el">...</span></div><div class="a" style="left:685px;top:1067px;width:62px;height:3px;background:#76b9ed"></div><svg class="a" style="left:758px;top:1040px" width="22" height="22"><rect x="8" y="5" width="13" height="12" fill="#1a8ae0"/><path d="M9 7 L14.5 11 L20 7" stroke="#fff" stroke-width="1.5" fill="none"/><path d="M0 3 L11 1 V21 L0 19 Z" fill="#0a64c0"/><ellipse cx="5.5" cy="11" rx="3" ry="4" stroke="#fff" stroke-width="1.8" fill="none"/></svg><div class="a tbt" style="left:783px">Inb<span class="el">...</span></div><div class="a" style="left:758px;top:1067px;width:62px;height:3px;background:#76b9ed"></div><svg class="a" style="left:832px;top:1044px" width="18" height="14"><rect x="0" y="0.5" width="18" height="12" fill="#f4f4f4"/><rect x="0" y="0.5" width="18" height="2" fill="#d8d8d8"/><path d="M5 6 H14 M5 8.5 H12" stroke="#888" stroke-width="1"/></svg><div class="a tbt" style="left:855px">Unt<span class="el">...</span></div><div class="a" style="left:830px;top:1067px;width:62px;height:3px;background:#76b9ed"></div><svg class="a" style="left:903px;top:1040px" width="21" height="22"><rect x="1" y="3" width="15" height="18" fill="#f0f0e0" stroke="#999" stroke-width="0.8"/><rect x="3" y="8" width="11" height="11" fill="#90d050"/><path d="M1 3 H16" stroke="#ccc" stroke-width="2"/><path d="M9 15 L19 2 L21 3.5 L11 16.5 Z" fill="#e07020"/></svg><div class="a tbt" style="left:926px">D:\<span class="el">...</span></div><div class="a" style="left:902px;top:1067px;width:62px;height:3px;background:#76b9ed"></div><svg class="a" style="left:976px;top:1041px" width="20" height="20"><path d="M3 2 H19 L17 20 H1 Z" fill="#a8d4ec"/><path d="M3 2 H19" stroke="#7a9ab0" stroke-width="1.5"/><path d="M4 6 H16 M3.5 9 H16 M3.2 12 H15.5 M3 15 H15.5" stroke="#6a90a8" stroke-width="0.7"/></svg><div class="a tbt" style="left:999px">Unti<span class="el">...</span></div><div class="a" style="left:974px;top:1067px;width:62px;height:3px;background:#76b9ed"></div><svg class="a" style="left:1048px;top:1041px" width="20" height="20"><path d="M3 2 H19 L17 20 H1 Z" fill="#a8d4ec"/><path d="M3 2 H19" stroke="#7a9ab0" stroke-width="1.5"/><path d="M4 6 H16 M3.5 9 H16 M3.2 12 H15.5 M3 15 H15.5" stroke="#6a90a8" stroke-width="0.7"/></svg><div class="a tbt" style="left:1071px">Unt<span class="el">...</span></div><div class="a" style="left:1046px;top:1067px;width:62px;height:3px;background:#76b9ed"></div><svg class="a" style="left:1119px;top:1040px" width="22" height="22"><rect x="9" y="3" width="12" height="16" fill="#1e7145"/><path d="M11 7 H19 M11 11 H19 M11 15 H19 M15 5 V17" stroke="#fff" stroke-width="1.2"/><path d="M0 2.5 L11 1 V21 L0 19.5 Z" fill="#1d6b40"/><path d="M2.5 7 L8 15 M8 7 L2.5 15" stroke="#fff" stroke-width="2"/></svg><div class="a tbt" style="left:1142px">379<span class="el">...</span></div><div class="a" style="left:1118px;top:1067px;width:62px;height:3px;background:#76b9ed"></div><div class="a" style="left:1185px;top:1032px;width:71px;height:38px;background:#404040"></div><svg class="a" style="left:1191px;top:1041px" width="20" height="20"><rect width="20" height="20" fill="#ef6a38"/><circle cx="10" cy="10" r="7" fill="#f4c0a8"/><circle cx="10.5" cy="9.5" r="5.5" fill="#d0d0d0"/><path d="M8 12 L13 7" stroke="#ef6a38" stroke-width="1.3"/><circle cx="13" cy="7" r="1.5" fill="#fff"/></svg><div class="a tbt" style="left:1215px">Pos<span class="el">...</span></div><div class="a" style="left:1185px;top:1067px;width:71px;height:3px;background:#76b9ed"></div><svg class="a" style="left:1266px;top:1043px" width="18" height="11"><path d="M1.5 10 L9 2.5 L16.5 10" stroke="#fff" stroke-width="1.3" fill="none"/></svg><svg class="a" style="left:1296px;top:1043px" width="18" height="14"><rect x="0" y="0.5" width="17" height="12.5" fill="#e9bd6f"/><path d="M0.5 1 L8.5 7.5 L16.5 1" stroke="#9a7030" stroke-width="1" fill="none"/></svg><svg class="a" style="left:1326px;top:1042px" width="18" height="18"><path d="M6.5 1.5 V7.5 M11.5 10.5 V16.5 M1.5 11.5 H7.5 M10.5 6.5 H16.5 M6.5 10.5 V16.5 M11.5 1.5 V7.5 M1.5 6.5 H7.5 M10.5 11.5 H16.5" stroke="#fff" stroke-width="2.2" stroke-linecap="round"/></svg><svg class="a" style="left:1354px;top:1041px" width="22" height="20"><rect x="3.5" y="4.5" width="17" height="11" stroke="#fff" stroke-width="1.2" fill="none"/><path d="M12 15.5 V18.5 M8 18.5 H16" stroke="#fff" stroke-width="1.2"/><rect x="0.5" y="1" width="4" height="5" stroke="#fff" stroke-width="1" fill="#000"/></svg><svg class="a" style="left:1384px;top:1041px" width="22" height="20"><path d="M1 7 H4 L9 2 V18 L4 13 H1 Z" stroke="#fff" stroke-width="1.2" fill="none"/><path d="M12 7 Q13.5 10 12 13 M15 4.5 Q18 10 15 15.5 M18 2 Q22.5 10 18 18" stroke="#fff" stroke-width="1.2" fill="none"/></svg><svg class="a" style="left:1415px;top:1041px" width="22" height="22"><circle cx="9" cy="9" r="8" fill="#00a8e8"/><circle cx="5" cy="5" r="4" fill="#00a8e8"/><circle cx="13" cy="13" r="4" fill="#00a8e8"/><path d="M12 5.5 Q11 4.5 9 4.5 Q5.8 4.5 5.8 7 Q5.8 8.6 9 9.2 Q12.2 9.8 12.2 11.4 Q12.2 13.5 9 13.5 Q6.8 13.5 5.6 12" stroke="#fff" stroke-width="1.8" fill="none"/><circle cx="16.5" cy="16.5" r="4.5" fill="#5cb030" stroke="#000" stroke-width="1"/><path d="M14.5 16.5 L16 18 L18.5 15" stroke="#fff" stroke-width="1.2" fill="none"/></svg><div class="a tbt" style="left:1448px;font-size:14px;top:1044px;letter-spacing:0">ENG</div><div class="a tbt" style="left:1493px;font-size:14px;top:1044px;letter-spacing:0">13:07</div><svg class="a" style="left:1550px;top:1041px" width="22" height="20"><path d="M1 1 H21 V15 H14 L11 18 L8 15 H1 Z" stroke="#fff" stroke-width="1.2" fill="none"/></svg><div class="a" style="left:1596px;top:1032px;width:1px;height:38px;background:#555"></div><!--/TB-->
<!--ANNOT--><svg class="a" style="left:0;top:0;z-index:50" width="1602" height="1070"><path d="M206.0 248.0 C205.6 243.9 202.7 232.2 203.4 223.7 C204.1 215.2 203.3 203.1 210.0 196.8 C216.7 190.5 224.7 188.9 243.7 186.0 C262.7 183.1 288.3 180.7 324.0 179.4 C359.7 178.1 426.7 177.8 458.0 178.0 C489.3 178.2 494.1 177.1 512.0 180.7 C530.0 184.3 551.4 192.3 565.7 199.5 C580.0 206.7 591.3 217.4 598.0 223.7 C604.7 229.9 606.9 232.5 606.0 237.0 C605.1 241.5 603.8 247.3 592.6 250.5 C581.4 253.7 561.4 255.6 539.0 256.0 C516.6 256.4 489.3 253.9 458.0 253.0 C426.7 252.1 386.7 251.4 351.0 250.5 C315.3 249.6 267.9 248.5 243.7 247.8 C219.5 247.1 212.3 246.7 206.0 246.5" stroke="#fb0606" stroke-width="2.8" fill="none" stroke-linecap="round" stroke-linejoin="round"/><path d="M699.1 431.9 C689.8 430.2 661.7 425.4 643.0 422.0 C624.3 418.6 606.1 415.2 587.0 411.7 C567.9 408.2 546.3 403.5 528.1 401.0 C509.9 398.5 492.4 397.2 477.7 396.8 C463.0 396.4 457.2 395.7 440.0 398.5 C422.8 401.3 394.6 407.3 374.3 413.8 C354.0 420.3 334.6 429.1 318.2 437.7 C301.8 446.3 288.8 455.0 276.2 465.7 C263.6 476.4 252.8 489.5 242.5 502.1 C232.2 514.7 222.9 528.3 214.5 541.4 C206.1 554.5 198.6 567.5 192.0 580.6 C185.4 593.7 180.1 607.3 175.2 619.9 C170.3 632.5 165.7 645.4 162.6 656.3 C159.5 667.1 158.0 671.7 156.5 685.0 C155.0 698.3 154.2 718.2 153.5 736.0 C152.8 753.8 152.5 773.3 152.6 792.0 C152.7 810.7 153.1 831.2 154.0 848.0 C154.9 864.8 156.6 882.2 158.2 893.0 C159.8 903.8 162.4 906.2 163.8 912.7 C165.2 919.2 165.9 921.9 166.6 932.3 C167.3 942.7 167.4 964.0 168.1 974.9 C168.8 985.8 169.3 990.8 170.9 997.4 C172.5 1004.0 174.5 1008.9 177.5 1014.2 C180.5 1019.5 184.0 1024.8 188.7 1029.2 C193.4 1033.6 198.6 1037.0 205.5 1040.4 C212.4 1043.8 222.1 1047.3 229.9 1049.8 C237.7 1052.3 246.2 1054.0 252.4 1055.4 C258.6 1056.8 264.8 1057.7 267.3 1058.2" stroke="#fb0606" stroke-width="2.8" fill="none" stroke-linecap="round" stroke-linejoin="round"/><path d="M283.3 1058.2 C287.5 1057.6 298.1 1056.5 308.5 1054.5 C318.9 1052.5 333.5 1049.3 346.0 1046.0 C358.5 1042.7 372.5 1038.8 383.4 1034.8 C394.3 1030.8 402.1 1026.1 411.5 1021.7 C420.9 1017.3 425.8 1015.1 439.5 1008.4 C453.2 1001.7 475.1 989.6 493.6 981.4 C512.1 973.2 531.6 967.2 550.7 959.2 C569.8 951.2 590.0 942.2 608.0 933.7 C626.0 925.2 643.4 918.3 658.8 908.3 C674.1 898.2 689.0 886.1 700.1 873.4 C711.2 860.7 719.4 845.8 725.5 832.0 C731.6 818.2 734.2 805.5 736.6 790.7 C739.0 775.9 740.1 757.9 739.8 743.1 C739.5 728.3 737.0 713.1 735.0 701.8 C733.0 690.4 731.7 688.3 728.0 675.0 C724.3 661.7 718.9 640.3 712.7 622.0 C706.5 603.7 698.6 582.9 690.7 565.0 C682.8 547.1 673.0 528.1 665.5 514.6 C658.0 501.1 652.9 494.0 645.9 483.7 C638.9 473.4 630.9 461.5 623.4 452.9 C615.9 444.3 606.4 437.5 601.0 431.9 C595.6 426.3 593.3 422.2 591.2 419.2 C589.1 416.1 588.9 414.5 588.4 413.6" stroke="#fb0606" stroke-width="2.8" fill="none" stroke-linecap="round" stroke-linejoin="round"/></svg><!--/ANNOT-->
</body></html>
